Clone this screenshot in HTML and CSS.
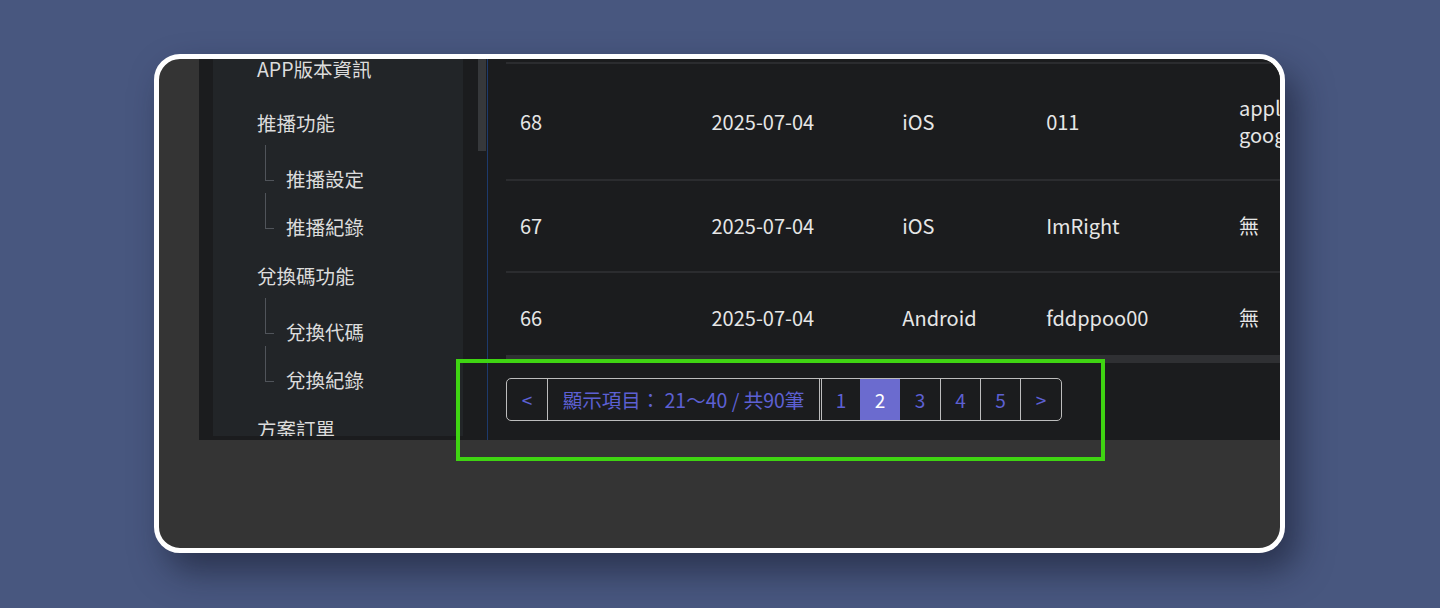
FILE: index.html
```html
<!DOCTYPE html>
<html>
<head>
    <meta charset="utf-8">
    <title>兌換紀錄</title>
    <link rel="stylesheet" href="styles.css">
</head>
<body>
<div class="card">
    <div class="app">
        <aside class="sidebar">
            <ul class="nav">
                <li class="nav-single"><a class="nav-link">APP版本資訊</a></li>
                <li>
                    <a class="nav-link">推播功能</a>
                    <ul class="sub">
                        <li><a class="sub-link">推播設定</a></li>
                        <li><a class="sub-link">推播紀錄</a></li>
                    </ul>
                </li>
                <li>
                    <a class="nav-link">兌換碼功能</a>
                    <ul class="sub">
                        <li><a class="sub-link">兌換代碼</a></li>
                        <li><a class="sub-link">兌換紀錄</a></li>
                    </ul>
                </li>
                <li><a class="nav-link">方案訂單</a></li>
            </ul>
        </aside>
        <div class="scroll-track"><div class="scroll-thumb"></div></div>
        <main class="main">
            <div class="table-wrap">
                <table class="records">
                    <tr>
                        <td>68</td>
                        <td>2025-07-04</td>
                        <td>iOS</td>
                        <td>011</td>
                        <td class="multi">apple_monthly<br>google_monthly</td>
                    </tr>
                    <tr>
                        <td>67</td>
                        <td>2025-07-04</td>
                        <td>iOS</td>
                        <td>ImRight</td>
                        <td>無</td>
                    </tr>
                    <tr>
                        <td>66</td>
                        <td>2025-07-04</td>
                        <td>Android</td>
                        <td>fddppoo00</td>
                        <td>無</td>
                    </tr>
                </table>
            </div>
            <div class="hscroll"></div>
            <div class="pager">
                <span class="pg pg-arrow">&lt;</span>
                <span class="pg pg-info">顯示項目： 21～40 / 共90筆</span>
                <span class="pg pg-first">1</span>
                <span class="pg active">2</span>
                <span class="pg">3</span>
                <span class="pg">4</span>
                <span class="pg">5</span>
                <span class="pg pg-arrow">&gt;</span>
            </div>
        </main>
    </div>
</div>
<div class="highlight"></div>
</body>
</html>
```

FILE: styles.css
```css
html {
    height: 100%;
    background: #48577f;
}

body {
    margin: 0;
    padding: 54px 0 0 154px;
    height: 608px;
    box-sizing: border-box;
    overflow: hidden;
    font-family: "Noto Sans CJK TC", "Noto Sans", sans-serif;
    color: #e3e3e3;
}

.card {
    width: 1131px;
    height: 499px;
    box-sizing: border-box;
    border: 5px solid #fff;
    border-radius: 26px;
    background: #343434;
    overflow: hidden;
    box-shadow: 12px 18px 34px rgba(18, 22, 40, .55);
}

.app {
    display: flex;
    width: 1240px;
    height: 381px;
    margin-left: 40px;
    padding-left: 14px;
    box-sizing: border-box;
    background: #1b1c1e;
}

.sidebar {
    width: 250px;
    height: 377px;
    flex: none;
    background: #222528;
    overflow: hidden;
}

.nav,
.sub {
    list-style: none;
    margin: 0;
    padding: 0;
}

.nav {
    margin-top: -14px;
}

.nav-single {
    margin-bottom: 6px;
}

.nav-link,
.sub-link {
    display: block;
    height: 48px;
    line-height: 48px;
    font-size: 19.5px;
    color: #dcdcdc;
}

.nav-link {
    padding-left: 44px;
}

.sub {
    padding: 8px 0 1px;
}

.sub li {
    position: relative;
}

.sub li::before {
    content: "";
    position: absolute;
    left: 52px;
    top: -10px;
    width: 8px;
    height: 35px;
    border-left: 1px solid #50545a;
    border-bottom: 1px solid #50545a;
}

.sub-link {
    padding-left: 73px;
}

.scroll-track {
    width: 8px;
    margin-left: 15px;
    flex: none;
}

.scroll-thumb {
    height: 92px;
    background: #36383b;
}

.main {
    flex: 1;
    margin-left: 1px;
    padding-left: 18px;
    border-left: 1px solid #1d3a6c;
}

.table-wrap {
    height: 296px;
    padding-top: 3px;
    box-sizing: border-box;
    overflow: hidden;
}

.records {
    border-collapse: collapse;
    width: 900px;
    font-size: 20px;
    line-height: 28px;
    white-space: nowrap;
}

.records td {
    padding: 31px 14px;
    border-top: 2px solid #2b2c2f;
    color: #e6e6e6;
    vertical-align: middle;
}

.records td.multi {
    line-height: 26.5px;
}

.records td:nth-child(1) { width: 164px; }
.records td:nth-child(2) { width: 163px; }
.records td:nth-child(3) { width: 116px; }
.records td:nth-child(4) { width: 165px; }

.hscroll {
    height: 8px;
    margin-right: -20px;
    background: #2f3033;
}

.pager {
    display: inline-flex;
    margin-top: 15px;
    height: 43px;
    border: 1px solid #bdbdbd;
    border-radius: 5px;
    box-sizing: border-box;
}

.pg {
    width: 40px;
    box-sizing: border-box;
    display: flex;
    align-items: center;
    justify-content: center;
    font-size: 19px;
    color: #5d60d3;
    border-left: 1px solid #bdbdbd;
}

.pg:first-child {
    border-left: 0;
}

.pg-info {
    width: 273px;
    font-size: 19.5px;
    border-right: 1px solid #bdbdbd;
}

.pg-first {
    width: 39px;
    margin-left: 1px;
}

.pg.active {
    background: #6b6bcf;
    color: #fff;
    border-left: 0;
}

.pg.active + .pg {
    border-left: 0;
}

.pg-arrow:last-child {
    width: 41px;
}

.highlight {
    position: absolute;
    left: 456px;
    top: 359px;
    width: 649px;
    height: 102px;
    box-sizing: border-box;
    border: 4px solid #3fd412;
}
```
